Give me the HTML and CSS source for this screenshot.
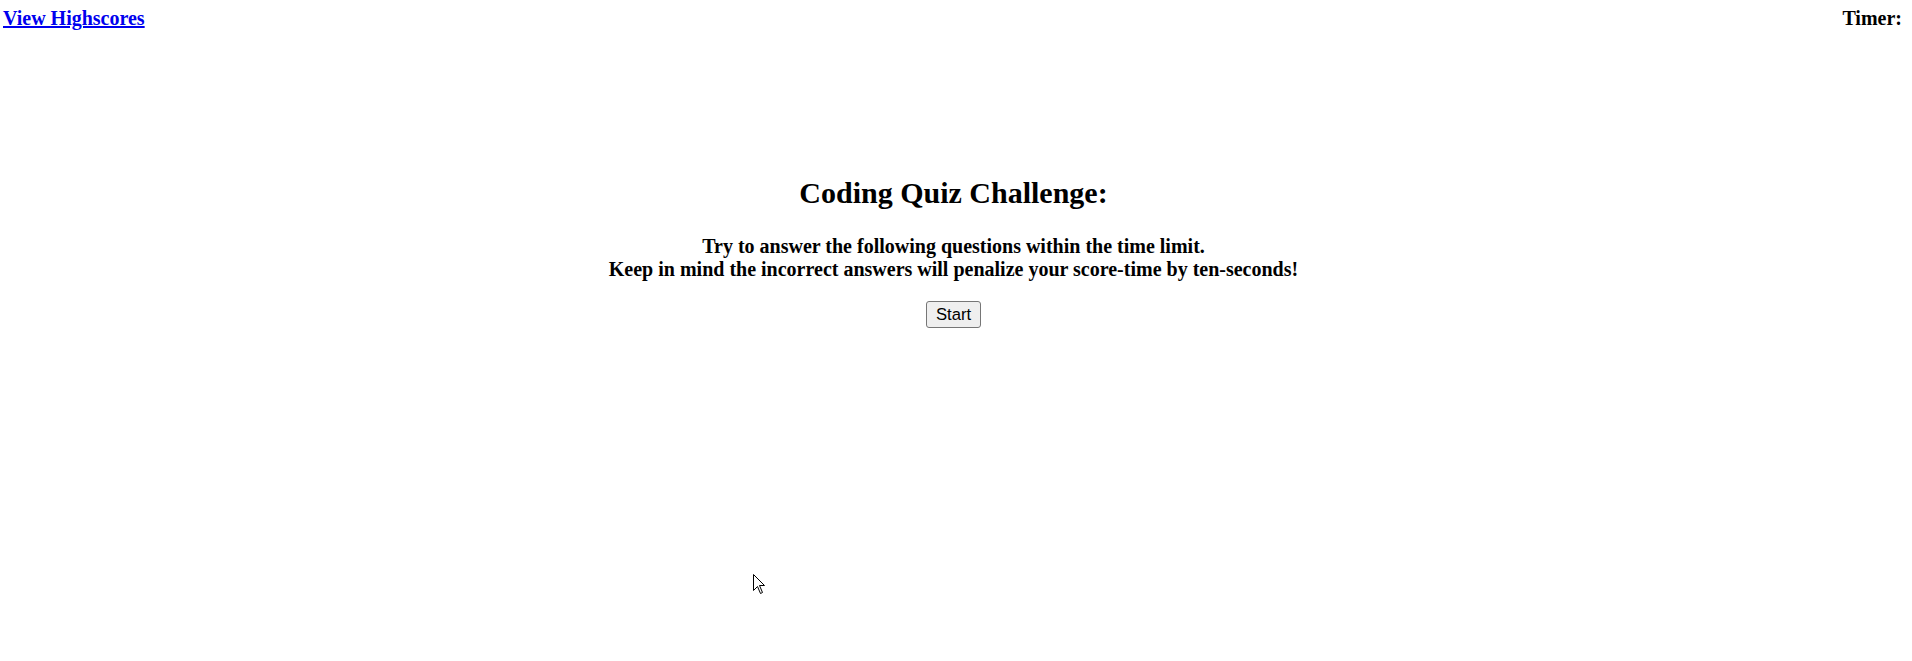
FILE: index.html
```html
<!DOCTYPE html>
<html lang="en">
<head>
<meta charset="utf-8">
<title>Coding Quiz</title>
<link rel="stylesheet" href="styles.css">
</head>
<body>
<header class="topbar">
  <a class="highscores" href="#">View Highscores</a>
  <span class="timer">Timer:</span>
</header>
<main class="intro">
  <h2 class="title">Coding Quiz Challenge:</h2>
  <p class="instructions">Try to answer the following questions within the time limit.<br>Keep in mind the incorrect answers will penalize your score-time by ten-seconds!</p>
  <button class="start" type="button">Start</button>
</main>
<svg class="cursor" width="13" height="21" viewBox="0 0 13 21" aria-hidden="true">
  <path d="M0.5 0.5 L0.5 16.5 L4.5 12.5 L7.5 19.5 L9.5 18.5 L6.5 11.5 L11.5 11.5 Z" fill="#fff" stroke="#000" stroke-width="1" stroke-linejoin="miter"/>
</svg>
</body>
</html>
```
FILE: styles.css
```css
html, body {
  margin: 0;
  padding: 0;
  background: #fff;
}
body {
  font-family: "Liberation Serif", "Times New Roman", serif;
  color: #000;
  position: relative;
  min-height: 661px;
}
.topbar {
  display: flex;
  justify-content: space-between;
  align-items: baseline;
  padding: 7px 10px 0 3px;
  font-size: 20px;
  font-weight: bold;
  line-height: 23px;
}
.highscores {
  color: #0000ee;
  text-decoration: underline;
}
.intro {
  text-align: center;
  padding: 146px 5px 0 0;
}
.title {
  margin: 0;
  font-size: 30px;
  font-weight: bold;
  line-height: 34.5px;
}
.instructions {
  margin: 24px 0 20px;
  font-size: 20px;
  font-weight: bold;
  line-height: 23px;
}
.start {
  font-family: "Liberation Sans", Arial, sans-serif;
  font-size: 16.67px;
  line-height: 19px;
  padding: 3px 9px;
  border: 1px solid #767676;
  border-radius: 3px;
  background: #efefef;
  color: #000;
}
.cursor {
  position: absolute;
  left: 753px;
  top: 574px;
}
```
